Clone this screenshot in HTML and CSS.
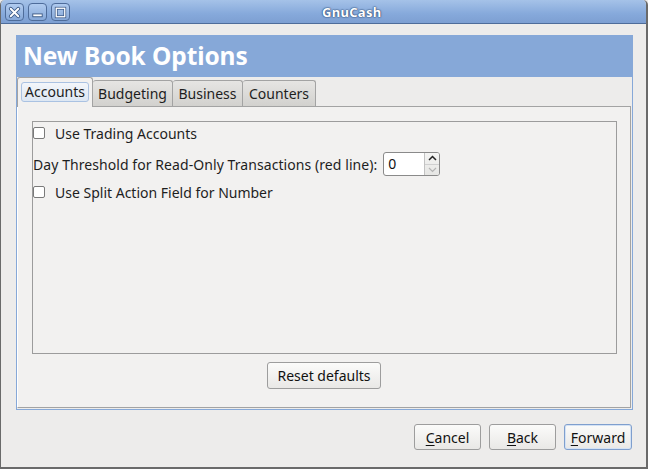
FILE: index.html
```html
<!DOCTYPE html>
<html>
<head>
<meta charset="utf-8">
<link rel="stylesheet" href="styles.css">
</head>
<body>
<div class="window">
  <div class="titlebar">
    <div class="wbtns">
      <span class="wbtn"><svg width="18" height="17" viewBox="0 0 18 17"><path d="M5 4.5 L13 12.5 M13 4.5 L5 12.5" stroke="#3c5a86" stroke-width="4" stroke-linecap="round"/><path d="M5 4.5 L13 12.5 M13 4.5 L5 12.5" stroke="#fff" stroke-width="2" stroke-linecap="round"/></svg></span>
      <span class="wbtn"><svg width="18" height="17" viewBox="0 0 18 17"><rect x="4" y="10" width="10" height="3" fill="#fff" stroke="#3c5a86" stroke-width="1"/></svg></span>
      <span class="wbtn"><svg width="18" height="17" viewBox="0 0 18 17"><rect x="4.5" y="4" width="9" height="9" fill="none" stroke="#3c5a86" stroke-width="3"/><rect x="4.5" y="4" width="9" height="9" fill="none" stroke="#fff" stroke-width="1.4"/></svg></span>
    </div>
    <div class="wtitle">GnuCash</div>
  </div>
  <div class="content">
    <div class="assistant">
      <div class="header">New Book Options</div>
      <div class="notebook">
        <div class="tabs">
          <div class="tab active"><span class="focus">Accounts</span></div>
          <div class="tab tab-budget">Budgeting</div>
          <div class="tab tab-business">Business</div>
          <div class="tab tab-counters">Counters</div>
        </div>
        <div class="page">
          <div class="frame">
            <label class="row check-row"><span class="check"></span><span>Use Trading Accounts</span></label>
            <div class="row spin-row">
              <span class="lbl">Day Threshold for Read-Only Transactions (red line):</span>
              <span class="spin"><span class="spin-val">0</span><span class="spin-btns"><span class="arr up"><svg width="9" height="6" viewBox="0 0 9 6"><path d="M1 5 L4.5 1.5 L8 5" fill="none" stroke="#222" stroke-width="1.5"/></svg></span><span class="arr down"><svg width="9" height="6" viewBox="0 0 9 6"><path d="M1 1 L4.5 4.5 L8 1" fill="none" stroke="#b4b4b4" stroke-width="1.2"/></svg></span></span></span>
            </div>
            <label class="row check-row row3"><span class="check"></span><span>Use Split Action Field for Number</span></label>
          </div>
          <div class="reset-wrap"><span class="btn reset">Reset defaults</span></div>
        </div>
      </div>
    </div>
    <div class="actions">
      <span class="btn act"><u>C</u>ancel</span>
      <span class="btn act"><u>B</u>ack</span>
      <span class="btn act default"><u>F</u>orward</span>
    </div>
  </div>
</div>
</body>
</html>
```
FILE: styles.css
```css
* { box-sizing: border-box; }
html, body { margin: 0; padding: 0; background: #edeceb; }
body { font-family: "Noto Sans", "DejaVu Sans", sans-serif; font-size: 14px; color: #3c3c3c; }
.window {
  width: 648px; height: 469px;
  background: #edeceb;
  border-left: 1px solid #6a6a6a;
  border-right: 2px solid #6a6a6a;
  border-bottom: 2px solid #6a6a6a;
  border-radius: 5px 5px 0 0;
  overflow: hidden;
  display: flex; flex-direction: column;
}
.titlebar {
  height: 24px; flex: none;
  background: linear-gradient(#a5c2e8, #86a9db 60%, #7d9fd2);
  border-bottom: 1px solid #4e6c9a;
  display: flex; align-items: center; position: relative;
}
.wbtns { display: flex; gap: 4px; padding-left: 4px; padding-top: 1px; }
.wbtn {
  width: 19px; height: 18px; border: 1px solid #4e6c9a; border-radius: 4px;
  background: linear-gradient(#b0cbef, #86a8d8);
  display: flex; align-items: center; justify-content: center;
}
.wbtn svg { display: block; }
.wtitle {
  margin-left: 252px;
  color: #fff; font-weight: bold; font-size: 13px;
  text-shadow: 0 0 1px #33507a, 0 0 1px #33507a, 0 0 2px #33507a;
  letter-spacing: 0.3px;
}
.content { padding: 11px 14px 0 15px; display: flex; flex-direction: column; }
.assistant {
  border: 1px solid #86a8d8; border-top: none;
  height: 375px; display: flex; flex-direction: column;
  width: 617px;
}
.header {
  height: 42px; background: #86a8d8; color: #fff;
  font-size: 24.5px; font-weight: bold; line-height: 42px;
  padding-left: 6px; letter-spacing: -0.1px;
}
.notebook { display: flex; flex-direction: column; flex: 1; padding: 0 1px 1px 0; }
.tabs { display: flex; align-items: flex-end; height: 29px; position: relative; z-index: 1; }
.tab {
  height: 26px; border: 1px solid #a3a3a3; border-bottom: none; border-left: none;
  border-radius: 3px 3px 0 0;
  background: linear-gradient(#e6e5e3, #d2d1ce);
  color: #1e1e1e; display: flex; align-items: center; justify-content: center;
}
.tab.active {
  height: 30px; width: 76px; margin-bottom: -1px;
  border: 1px solid #a3a3a3; border-bottom: none;
  background: #f2f1f0; padding-bottom: 2px;
}
.focus {
  border: 1px solid #aac2e2; border-radius: 3px; background: linear-gradient(#f3f6fa, #dde7f3);
  padding: 0 2px; height: 20px; line-height: 18px; width: 68px; text-align: center;
}
.tab-budget { width: 80px; }
.tab-business { width: 70px; }
.tab-counters { width: 73px; }
.page {
  flex: 1; border: 1px solid #a3a3a3; background: #f2f1f0;
  border-left-color: #fff; border-top-color: #a3a3a3;
  padding: 14px 13px 0 14px;
  display: flex; flex-direction: column;
}
.frame {
  height: 233px; border: 1px solid #9c9c9c; padding: 4px 0 0 0;
  display: flex; flex-direction: column;
}
.row { display: flex; align-items: center; color: #1e1e1e; }
.check-row { height: 14px; margin-top: 0px; }
.check {
  width: 12px; height: 12px; border: 1px solid #7a7a7a; border-radius: 2px;
  background: #fff; margin-right: 10px; flex: none;
}
.spin-row { height: 24px; margin-top: 12px; }
.lbl { margin-right: 6px; letter-spacing: 0.07px; }
.spin {
  display: flex; width: 57px; height: 24px;
  border: 1px solid #8a8a8a; border-radius: 3px; background: #fff;
}
.spin-val { width: 40px; padding-left: 4px; line-height: 22px; color: #111; }
.spin-btns {
  width: 15px; border-left: 1px solid #c2c2c2; display: flex; flex-direction: column;
  background: linear-gradient(#f4f4f3, #e6e6e4); border-radius: 0 2px 2px 0;
}
.arr { flex: 1; display: flex; align-items: center; justify-content: center; }
.arr.up { border-bottom: 1px solid #d0d0d0; }
.row3 { margin-top: 9px; }
.reset-wrap { display: flex; justify-content: center; padding-top: 8px; padding-right: 1px; }
.btn {
  display: inline-flex; align-items: center; justify-content: center;
  border: 1px solid #9d9d9d; border-radius: 3px;
  background: linear-gradient(#fbfbfa, #e9e8e6);
  color: #111; height: 27px;
}
.reset { width: 114px; }
.actions { display: flex; justify-content: flex-end; gap: 8px; margin-top: 14px; padding-right: 0px; }
.act { width: 67px; height: 26px; }
.act.default { width: 68px; border-color: #7f9fce; box-shadow: inset 0 0 0 1px #d4e2f4; }
u { text-decoration-thickness: 1px; text-underline-offset: 2px; }
```
